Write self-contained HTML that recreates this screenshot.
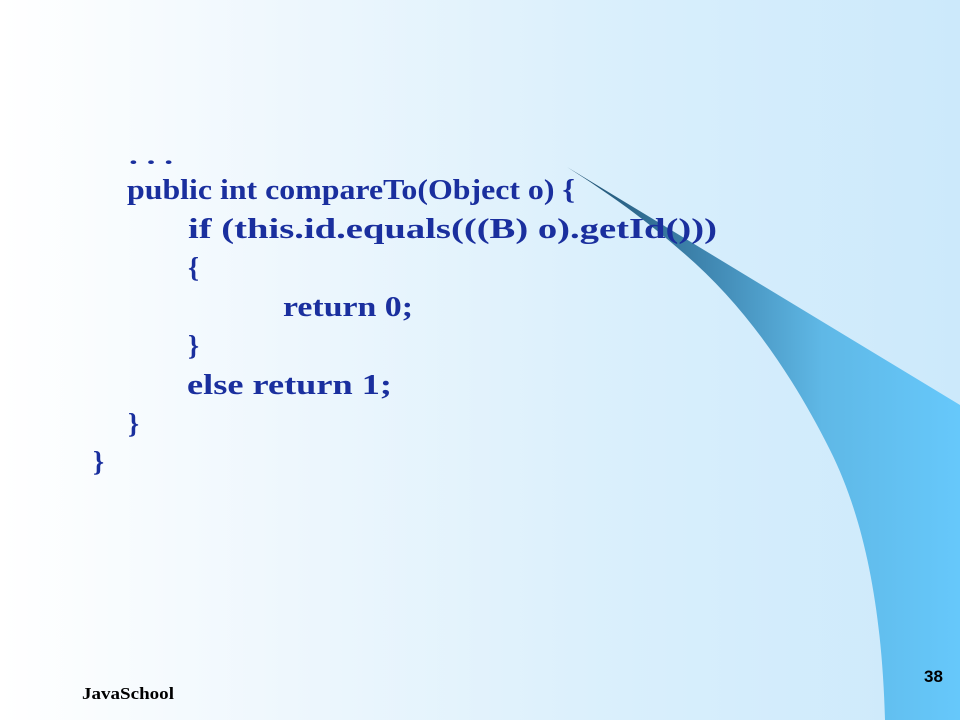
<!DOCTYPE html>
<html><head><meta charset="utf-8"><style>
html,body{margin:0;padding:0;}
body{width:960px;height:720px;overflow:hidden;background:linear-gradient(90deg,#ffffff 0%,#eef7fd 30%,#d9effc 65%,#cce9fb 100%);}
svg{position:absolute;left:0;top:0;}
</style></head><body>
<svg width="960" height="720" viewBox="0 0 960 720" xml:space="preserve">
<defs>
<linearGradient id="g" x1="567" y1="0" x2="960" y2="0" gradientUnits="userSpaceOnUse">
<stop offset="0" stop-color="#1f4f6e"/>
<stop offset="0.35" stop-color="#3f86b0"/>
<stop offset="0.65" stop-color="#5fb8e6"/>
<stop offset="1" stop-color="#66c8fb"/>
</linearGradient>
</defs>
<path d="M567,167 L960,405 L960,720 L885,720 C882,610 865,520 830,450 C790,370 740,300 680,250 C640,215 600,188 567,167 Z" fill="url(#g)"/>
<g font-family="'Liberation Serif',serif" font-weight="600" font-size="28" fill="#1a2f9e">
<text x="129" y="164" font-size="22" font-weight="bold" textLength="44" lengthAdjust="spacingAndGlyphs">. . .</text>
<text x="127" y="199" textLength="448" lengthAdjust="spacingAndGlyphs">public int compareTo(Object o) {</text>
<text x="188" y="238" textLength="529" lengthAdjust="spacingAndGlyphs">if (this.id.equals(((B) o).getId()))</text>
<text x="188" y="277">{</text>
<text x="283" y="316" textLength="130" lengthAdjust="spacingAndGlyphs">return 0;</text>
<text x="188" y="355">}</text>
<text x="187" y="394" textLength="205" lengthAdjust="spacingAndGlyphs">else return 1;</text>
<text x="128" y="433">}</text>
<text x="93" y="471">}</text>
</g>
<text x="82" y="699" font-family="'Liberation Serif',serif" font-weight="bold" font-size="17" fill="#000" textLength="92" lengthAdjust="spacingAndGlyphs">JavaSchool</text>
<text x="924" y="682" font-family="'Liberation Sans',sans-serif" font-weight="bold" font-size="17" fill="#000">38</text>
</svg>
</body></html>
